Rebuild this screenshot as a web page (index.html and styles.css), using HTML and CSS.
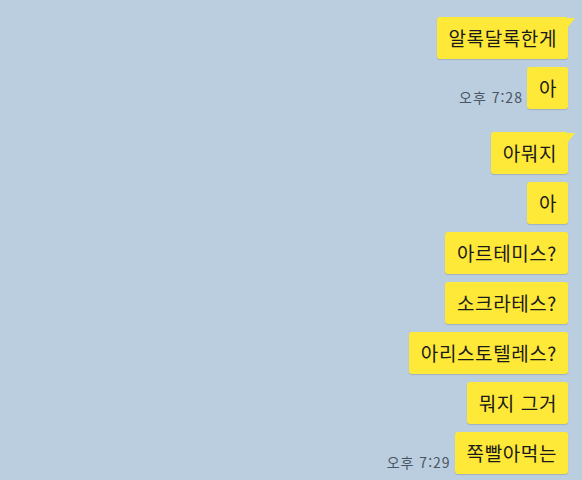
FILE: index.html
```
<!DOCTYPE html>
<html lang="ko">
<head>
  <meta charset="UTF-8">
  <meta name="viewport" content="width=device-width, initial-scale=1.0">
  <title>채팅</title>
  <link rel="stylesheet" href="styles.css">
</head>
<body>
  <div class="chat">
    <div class="group">
      <div class="row">
        <div class="bubble first">알록달록한게</div>
      </div>
      <div class="row">
        <span class="time">오후 7:28</span>
        <div class="bubble">아</div>
      </div>
    </div>

    <div class="group">
      <div class="row">
        <div class="bubble first">아뭐지</div>
      </div>
      <div class="row">
        <div class="bubble">아</div>
      </div>
      <div class="row">
        <div class="bubble">아르테미스?</div>
      </div>
      <div class="row">
        <div class="bubble">소크라테스?</div>
      </div>
      <div class="row">
        <div class="bubble">아리스토텔레스?</div>
      </div>
      <div class="row">
        <div class="bubble">뭐지 그거</div>
      </div>
      <div class="row">
        <span class="time">오후 7:29</span>
        <div class="bubble">쪽빨아먹는</div>
      </div>
    </div>
  </div>
</body>
</html>
```

FILE: styles.css
```
html, body {
  margin: 0;
  padding: 0;
  height: 100%;
  overflow: hidden;
  background: #bacee0;
  font-family: "Noto Sans CJK KR", "Noto Sans", sans-serif;
}
.chat {
  display: flex;
  flex-direction: column;
  gap: 23px;
  padding: 17px 14px 0 0;
}
.group {
  display: flex;
  flex-direction: column;
  gap: 8px;
}
.row {
  display: flex;
  justify-content: flex-end;
  align-items: flex-end;
  gap: 4px;
}
.bubble {
  position: relative;
  height: 42px;
  line-height: 42px;
  padding: 0 11px 0 12px;
  background: #fee838;
  border-radius: 3px;
  box-shadow: 0 1px 1px rgba(0, 0, 0, 0.15);
  color: #1a1a1a;
  font-size: 19px;
  letter-spacing: 0.6px;
  white-space: nowrap;
}
/* little tail on the first bubble of a group */
.bubble.first::after {
  content: "";
  position: absolute;
  top: 1px;
  right: -7px;
  border-top: 9px solid #fee838;
  border-right: 7px solid transparent;
}
.time {
  font-size: 14px;
  color: #4a5563;
  letter-spacing: 1px;
  margin-bottom: 2px;
}
```
